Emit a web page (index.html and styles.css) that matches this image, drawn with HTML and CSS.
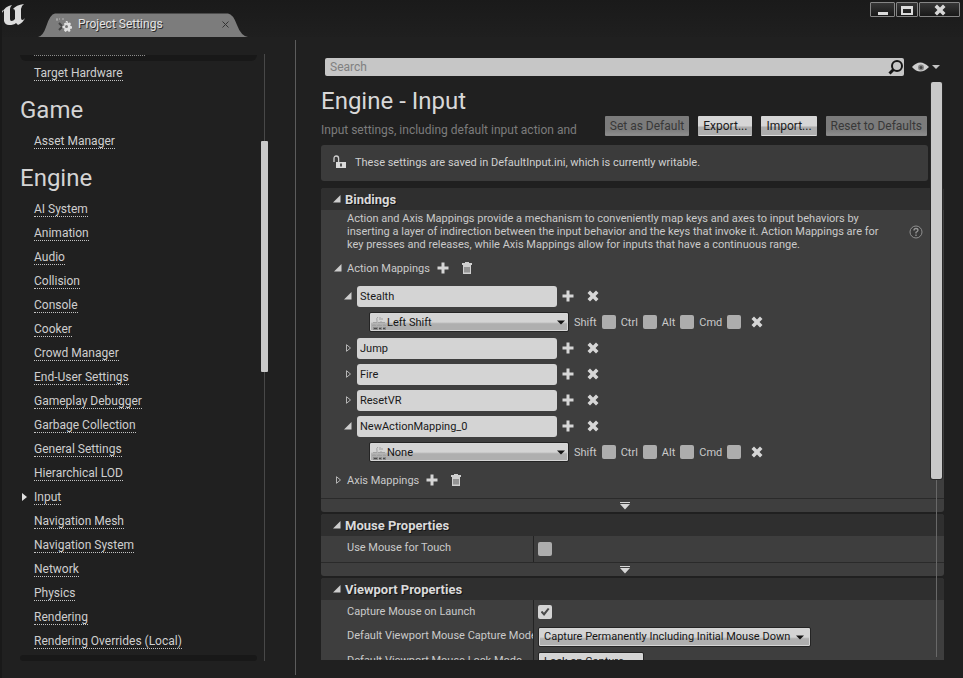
FILE: index.html
```html
<!DOCTYPE html>
<html lang="en">
<head>
<meta charset="utf-8">
<title>Project Settings</title>
<link rel="stylesheet" href="styles.css">
</head>
<body>
<svg class="defs" width="0" height="0" aria-hidden="true">
  <symbol id="plus" viewBox="0 0 12 12"><path d="M4.500 .5h3v4h4v3h-4v4h-3v-4h-4v-3h4z" fill="#d6d6d6"/></symbol>
  <symbol id="cross" viewBox="0 0 12 12"><path d="M.5 3l2.500-2.500 3 3 3-3 2.500 2.500-3 3 3 3-2.500 2.500-3-3-3 3-2.500-2.500 3-3z" fill="#d6d6d6"/></symbol>
  <symbol id="trash" viewBox="0 0 12 12"><path d="M4 0h4v1h3v2h-10v-2h3zM2 3h8v9h-8z" fill="#d0d0d0"/><path d="M4 5v5.500M6 5v5.500M8 5v5.500" stroke="#4a4a4a" stroke-width=".9"/></symbol>
  <symbol id="open" viewBox="0 0 8 8"><path d="M7.500 0v7.500h-7.500z" fill="#cdcdcd"/></symbol>
  <symbol id="shut" viewBox="0 0 8 8"><path d="M2.500 .7v6.600l4-3.300z" fill="none" stroke="#b4b4b4"/></symbol>
  <symbol id="down" viewBox="0 0 8 5"><path d="M0 0.500h8l-4 4z" fill="#141414"/></symbol>
  <symbol id="more" viewBox="0 0 12 8"><path d="M1 0h10v1h-10zM1 2h10l-5 5.500z" fill="#d6d6d6"/></symbol>
  <symbol id="keys" viewBox="0 0 15 15"><path d="M5 5q-1-3 1-4M8 4v-3M10 4v-2M1 6.500h4M6 6.500h7M0 9.500h4M5 9.500h5M11 9.500h3M5 5v2M9 5v2M2 8v2M7 8v2M12 8v2" fill="none" stroke="#a2a2a2"/><path d="M1 11h5v3h-5zM7 11h3v3h-3zM11 11h3v3h-3z" fill="#8b8b8b"/><path d="M2 12.500h3M7 12.500h2M11 12.500h2" stroke="#4b4b4b"/></symbol>
</svg>

<header class="titlebar">
  <svg class="logo" viewBox="0 0 24 22" role="img" aria-label="Unreal"><path d="M0 9Q3 2 10 1Q8 3 8 5v10q0 2 1.500 2q2 0 3.500-2v-8q0-2-2-2q3-4 11-5q-3 2-3 5v9q0 2 1.500 2q1 0 2.500-2q-2 5-7 7l-2-2q-2 2-7 2q-4 0-5-4v-9q0-1.500-1-1.500q-1.300 0-3 2.500z" fill="#dcdcdc"/></svg>
  <div class="tab">
    <svg class="tab-shape" viewBox="0 0 210 24" preserveAspectRatio="none" aria-hidden="true"><path d="M0 24Q5 23 8 14Q12 1 17 .5H190Q195 1 199 12Q203 23 210 24z" fill="#7c7c7c"/></svg>
    <svg class="tab-icon" viewBox="0 0 16 15" aria-hidden="true"><path d="M1 4v-3M0 2h4M6 2h3" stroke="#b5b5b5" stroke-dasharray="2 1"/><path d="M3 6l3 3M3 13l3-3" stroke="#454545" stroke-width="2"/><path d="M9.500 4h2l.5 2 2-.5 1 1.500-1 1.500 2 1v2l-2 .5 .5 2-1.500 1-1.500-1.500-2 1.500-1.500-1.500.5-2-2-.5v-2l2-.5-.5-2 1.500-1 1.500 1z" fill="#e0e0e0"/><circle cx="10.500" cy="9.500" r="1.500" fill="#777"/></svg>
    <span class="tab-name">Project Settings</span>
    <button class="tab-close" aria-label="Close tab"><svg viewBox="0 0 7 7"><path d="M.5.5l6 6M6.500.5l-6 6" stroke="#333"/></svg></button>
  </div>
  <div class="window-buttons">
    <button class="win" aria-label="Minimize"><svg width="12" height="12"><path d="M1 8h10v3H1z" fill="#dcdcdc"/></svg></button>
    <button class="win win-max" aria-label="Maximize"><svg width="12" height="12"><path d="M0 2h12v9H0zM2 5v4h8V5z" fill="#dcdcdc" fill-rule="evenodd"/></svg></button>
    <button class="win win-close" aria-label="Close"><svg width="12" height="12"><use href="#cross"/></svg></button>
  </div>
</header>

<div class="main">
  <nav class="sidebar" aria-label="Settings categories">
    <div class="list">
      <div class="edge edge-top"></div>
      <ul>
        <li><a href="#">Target Hardware</a></li>
      </ul>
      <h2>Game</h2>
      <ul>
        <li><a href="#">Asset Manager</a></li>
      </ul>
      <h2>Engine</h2>
      <ul>
        <li><a href="#">AI System</a></li>
        <li><a href="#">Animation</a></li>
        <li><a href="#">Audio</a></li>
        <li><a href="#">Collision</a></li>
        <li><a href="#">Console</a></li>
        <li><a href="#">Cooker</a></li>
        <li><a href="#">Crowd Manager</a></li>
        <li><a href="#">End-User Settings</a></li>
        <li><a href="#">Gameplay Debugger</a></li>
        <li><a href="#">Garbage Collection</a></li>
        <li><a href="#">General Settings</a></li>
        <li><a href="#">Hierarchical LOD</a></li>
        <li class="current"><a href="#">Input</a></li>
        <li><a href="#">Navigation Mesh</a></li>
        <li><a href="#">Navigation System</a></li>
        <li><a href="#">Network</a></li>
        <li><a href="#">Physics</a></li>
        <li><a href="#">Rendering</a></li>
        <li><a href="#">Rendering Overrides (Local)</a></li>
      </ul>
      <div class="edge edge-bottom"></div>
    </div>
    <div class="track"><div class="thumb"></div></div>
  </nav>

  <main class="content">
    <div class="search-row">
      <div class="search">
        <input type="search" placeholder="Search" aria-label="Search">
        <svg viewBox="0 0 16 16" aria-hidden="true"><circle cx="9" cy="7" r="5" fill="none" stroke="#161616" stroke-width="2"/><path d="M5.500 10.500l-4 4" stroke="#161616" stroke-width="3"/></svg>
      </div>
      <button class="view" aria-label="View options">
        <svg width="28" height="12" viewBox="0 0 28 12"><path d="M0 6Q8-3 17 6Q8 15 0 6z" fill="#cfcfcf"/><circle cx="9" cy="6.500" r="3" fill="#858585"/><circle cx="9" cy="6.500" r="1.500" fill="#404040"/><path d="M20 4h8l-4 4z" fill="#c4c4c4"/></svg>
      </button>
    </div>

    <div class="scroll">
      <h1>Engine - Input</h1>
      <div class="intro">
        <p>Input settings, including default input action and</p>
        <div class="actions">
          <button class="btn" disabled>Set as Default</button>
          <button class="btn">Export...</button>
          <button class="btn">Import...</button>
          <button class="btn" disabled>Reset to Defaults</button>
        </div>
      </div>
      <div class="notice">
        <svg width="13" height="14" viewBox="0 0 13 14" aria-hidden="true"><path d="M1 7v-3.500q0-2.500 2.300-2.500t2.300 2.500v3.500" fill="none" stroke="#cfcfcf" stroke-width="1.300"/><path d="M3 7h10v6h-10z" fill="#dadada"/><path d="M8 8.500v3" stroke="#222" stroke-width="1.500"/></svg>
        <span>These settings are saved in DefaultInput.ini, which is currently writable.</span>
      </div>

      <section>
        <h3><svg class="tri"><use href="#open"/></svg>Bindings</h3>
        <div class="body">
          <div class="about">
            <p>Action and Axis Mappings provide a mechanism to conveniently map keys and axes to input behaviors by<br>inserting a layer of indirection between the input behavior and the keys that invoke it. Action Mappings are for<br>key presses and releases, while Axis Mappings allow for inputs that have a continuous range.</p>
            <svg class="help" viewBox="0 0 14 14" role="img" aria-label="Help"><circle cx="7" cy="7" r="6" fill="#383838" stroke="#909090"/><path d="M5 5.500q0-2 2-2t2 1.800q0 1-2 2v1.200M7 9.500v1.500" fill="none" stroke="#989898" stroke-width="1.300"/></svg>
          </div>
          <div class="group">
            <svg class="tri"><use href="#open"/></svg><span>Action Mappings</span>
            <button class="icon" aria-label="Add action mapping"><svg><use href="#plus"/></svg></button>
            <button class="icon" aria-label="Remove all action mappings"><svg><use href="#trash"/></svg></button>
          </div>
          <div class="mapping">
            <svg class="tri"><use href="#open"/></svg><input type="text" value="Stealth" aria-label="Action name">
            <button class="icon" aria-label="Add key"><svg><use href="#plus"/></svg></button>
            <button class="icon" aria-label="Remove"><svg><use href="#cross"/></svg></button>
          </div>
          <div class="key">
            <div class="drop key-drop"><svg class="kb"><use href="#keys"/></svg><select aria-label="Key"><option>Left Shift</option></select><svg class="arrow"><use href="#down"/></svg></div>
            <label>Shift<input type="checkbox"></label><label>Ctrl<input type="checkbox"></label><label>Alt<input type="checkbox"></label><label>Cmd<input type="checkbox"></label>
            <button class="icon" aria-label="Remove key"><svg><use href="#cross"/></svg></button>
          </div>
          <div class="mapping">
            <svg class="tri"><use href="#shut"/></svg><input type="text" value="Jump" aria-label="Action name">
            <button class="icon" aria-label="Add key"><svg><use href="#plus"/></svg></button>
            <button class="icon" aria-label="Remove"><svg><use href="#cross"/></svg></button>
          </div>
          <div class="mapping">
            <svg class="tri"><use href="#shut"/></svg><input type="text" value="Fire" aria-label="Action name">
            <button class="icon" aria-label="Add key"><svg><use href="#plus"/></svg></button>
            <button class="icon" aria-label="Remove"><svg><use href="#cross"/></svg></button>
          </div>
          <div class="mapping">
            <svg class="tri"><use href="#shut"/></svg><input type="text" value="ResetVR" aria-label="Action name">
            <button class="icon" aria-label="Add key"><svg><use href="#plus"/></svg></button>
            <button class="icon" aria-label="Remove"><svg><use href="#cross"/></svg></button>
          </div>
          <div class="mapping">
            <svg class="tri"><use href="#open"/></svg><input type="text" value="NewActionMapping_0" aria-label="Action name">
            <button class="icon" aria-label="Add key"><svg><use href="#plus"/></svg></button>
            <button class="icon" aria-label="Remove"><svg><use href="#cross"/></svg></button>
          </div>
          <div class="key">
            <div class="drop key-drop"><svg class="kb"><use href="#keys"/></svg><select aria-label="Key"><option>None</option></select><svg class="arrow"><use href="#down"/></svg></div>
            <label>Shift<input type="checkbox"></label><label>Ctrl<input type="checkbox"></label><label>Alt<input type="checkbox"></label><label>Cmd<input type="checkbox"></label>
            <button class="icon" aria-label="Remove key"><svg><use href="#cross"/></svg></button>
          </div>
          <div class="group group-last">
            <svg class="tri"><use href="#shut"/></svg><span>Axis Mappings</span>
            <button class="icon" aria-label="Add axis mapping"><svg><use href="#plus"/></svg></button>
            <button class="icon" aria-label="Remove all axis mappings"><svg><use href="#trash"/></svg></button>
          </div>
        </div>
        <button class="expand" aria-label="Show advanced"><svg><use href="#more"/></svg></button>
      </section>

      <section>
        <h3><svg class="tri"><use href="#open"/></svg>Mouse Properties</h3>
        <div class="body">
          <div class="prop">
            <label for="touch">Use Mouse for Touch</label>
            <div class="value"><input type="checkbox" id="touch"></div>
          </div>
        </div>
        <button class="expand" aria-label="Show advanced"><svg><use href="#more"/></svg></button>
      </section>

      <section>
        <h3><svg class="tri"><use href="#open"/></svg>Viewport Properties</h3>
        <div class="body">
          <div class="prop">
            <label for="launch">Capture Mouse on Launch</label>
            <div class="value"><input type="checkbox" id="launch" checked></div>
          </div>
          <div class="prop">
            <label for="capture">Default Viewport Mouse Capture Mode</label>
            <div class="value"><div class="drop"><select id="capture"><option>Capture Permanently Including Initial Mouse Down</option></select><svg class="arrow"><use href="#down"/></svg></div></div>
          </div>
          <div class="prop">
            <label for="lock">Default Viewport Mouse Lock Mode</label>
            <div class="value"><div class="drop"><select id="lock"><option>Lock on Capture</option></select><svg class="arrow"><use href="#down"/></svg></div></div>
          </div>
        </div>
      </section>
      <div class="track content-track"><div class="thumb"></div></div>
    </div>
  </main>
</div>
</body>
</html>
```
FILE: styles.css
```css
* { box-sizing: border-box; }

body {
  margin: 0;
  height: 100vh;
  display: flex;
  flex-direction: column;
  overflow: hidden;
  background: #202020;
  border-left: 2px solid #191919;
  color: #cacaca;
  font: 11px/13px Roboto, sans-serif;
}

h1, h2, h3, p, ul { margin: 0; padding: 0; font-weight: 400; }
button, input, select { font: inherit; color: inherit; margin: 0; padding: 0; border: 0; }
button { background: none; }
svg { display: block; flex: none; }
.defs { position: absolute; }

/* Title bar */
.titlebar {
  height: 37px;
  flex: none;
  display: flex;
  align-items: flex-end;
  background: linear-gradient(#1a1a1a, #1f1f1f);
}
.logo { width: 24px; height: 22px; align-self: flex-start; margin-top: 4px; }
.tab {
  position: relative;
  width: 210px;
  height: 24px;
  margin-left: 12px;
  padding: 0 19px 2px 18px;
  display: flex;
  align-items: center;
  gap: 6px;
  color: #e4e4e4;
  font-size: 12px;
  text-shadow: 1px 1px 0 #2a2a2a;
}
.tab-shape { position: absolute; inset: 0; width: 100%; height: 100%; }
.tab-icon, .tab-name, .tab-close { position: relative; }
.tab-icon { width: 16px; height: 15px; }
.tab-close { margin-left: auto; }
.tab-close svg { width: 7px; height: 7px; }
.window-buttons { margin-left: auto; align-self: flex-start; display: flex; gap: 1px; padding: 2px 3px 0 0; }
.win {
  width: 25px;
  height: 15px;
  display: grid;
  place-items: center;
  border: 1px solid #858585;
  border-radius: 1px;
  background: linear-gradient(#363636, #191919);
}
.win-max { width: 22px; }
.win-close { width: 41px; }

/* Layout */
.main { flex: 1; min-height: 0; display: flex; }
.sidebar {
  flex: none;
  width: 294px;
  margin: 3px 0;
  padding: 14px 27px 14px 18px;
  display: flex;
  justify-content: space-between;
  border-right: 1px solid #5c5c5c;
}
.list { width: 237px; font-size: 12px; line-height: 14px; }
.list ul { list-style: none; }
.list li { height: 24px; padding: 5px 0 0 14px; }
.list a {
  display: inline-block;
  color: #cfcfcf;
  text-decoration: none;
  border-bottom: 1px dotted #c4c4c4;
}
.list h2 { height: 44px; padding-top: 11px; font-size: 24px; line-height: 28px; color: #d4d4d4; }
.current { position: relative; }
.current::before {
  content: "";
  position: absolute;
  left: 2px;
  top: 8px;
  border-left: 5px solid #e0e0e0;
  border-top: 4px solid transparent;
  border-bottom: 4px solid transparent;
}
.edge { height: 6px; background: #181818; }
.edge-top { border-radius: 0 0 8px 8px; margin-top: 1px; position: relative; }
.edge-top::before {
  content: "";
  position: absolute;
  left: 14px;
  top: 0;
  width: 111px;
  border-top: 1px dotted #8c8c8c;
}
.edge-bottom { border-radius: 4px; margin-top: 2px; }
.track {
  width: 7px;
  background: linear-gradient(#484848, #484848) center / 1px 100% no-repeat;
  display: flex;
  flex-direction: column;
}
.thumb { background: #c9c9c9; border-radius: 1px; }
.sidebar .thumb { height: 38%; margin-top: 87px; }

/* Content */
.content { flex: 1; min-width: 0; display: flex; flex-direction: column; padding: 21px 19px 18px 25px; }
.search-row { display: flex; align-items: center; gap: 8px; padding: 0 4px; }
.search { position: relative; flex: 1; }
.search input {
  display: block;
  width: 100%;
  height: 18px;
  padding: 0 24px 0 5px;
  border-radius: 2px;
  background: #c6c6c6;
  color: #222;
  font-size: 12px;
  appearance: none;
  outline: 0;
}
.search input::placeholder { color: #808080; opacity: 1; }
.search svg { position: absolute; right: 0; top: 1px; width: 16px; height: 16px; }

.scroll { position: relative; flex: 1; min-height: 0; margin-top: 6px; overflow: hidden; }
h1 { font-size: 24px; line-height: 28px; padding-top: 5px; color: #d8d8d8; }
.intro { display: flex; justify-content: space-between; align-items: flex-start; height: 22px; margin-right: 17px; padding-top: 1px; }
.intro p { color: #7c7c7c; font-size: 12px; line-height: 14px; padding-top: 7px; white-space: nowrap; }
.actions { display: flex; gap: 9px; }
.btn {
  height: 20px;
  padding: 0 5px;
  background: linear-gradient(#d6d6d6 50%, #adadad 60%);
  border-bottom: 1px solid #dcdcdc;
  color: #1a1a1a;
  font-size: 12px;
  line-height: 18px;
  border-radius: 1px;
  white-space: nowrap;
}
.btn:disabled { background: linear-gradient(#7b7b7b 70%, #8c8c8c); border-color: #888; color: #383838; }
.notice {
  height: 36px;
  margin: 8px 16px 7px 0;
  padding: 0 0 2px 12px;
  display: flex;
  align-items: center;
  gap: 9px;
  border-radius: 3px;
  background: #3b3b3b;
  color: #d0d0d0;
}

section { margin-bottom: 2px; border-radius: 3px; overflow: hidden; background: #3e3e3e; }
h3 {
  display: flex;
  align-items: center;
  gap: 4px;
  height: 22px;
  padding-left: 12px;
  background: #2f2f2f;
  color: #dadada;
  font-size: 13px;
  font-weight: 700;
  text-shadow: 1px 1px 0 #151515;
}
.tri { width: 8px; height: 8px; }
.about { display: flex; align-items: center; justify-content: space-between; padding: 2px 21px 2px 26px; }
.about p { white-space: nowrap; }
.help { width: 14px; height: 14px; }
.group { height: 30px; padding-left: 13px; display: flex; align-items: center; gap: 5px; }
.group span { margin-right: 2px; }
.group .icon + .icon { margin-left: 7px; }
.group-last { margin-bottom: 3px; }
.icon { flex: none; width: 12px; height: 12px; }
.icon svg { width: 12px; height: 12px; }
.mapping { height: 26px; padding-left: 23px; display: flex; align-items: center; gap: 5px; }
.mapping .icon + .icon { margin-left: 8px; }
.mapping input {
  width: 200px;
  height: 21px;
  padding: 0 3px;
  border-radius: 3px;
  background: #d4d4d4;
  color: #191919;
  outline: 0;
}
.key { height: 26px; padding-left: 48px; display: flex; align-items: center; gap: 5px; }
.key label { display: flex; align-items: center; gap: 5px; }
.key > .icon { margin-left: 5px; }
.drop { position: relative; display: flex; }
.drop select {
  appearance: none;
  width: 100%;
  height: 20px;
  padding: 0 19px 0 5px;
  border: 1px solid #242424;
  border-radius: 2px;
  outline: 0;
  background: linear-gradient(#d4d4d4 50%, #afafaf 60%);
  box-shadow: inset 0 0 0 1px #d6d6d6;
  color: #151515;
}
.key-drop { width: 200px; }
.key-drop select { padding-left: 17px; }
.kb { position: absolute; left: 3px; top: 4px; width: 15px; height: 15px; }
.arrow { position: absolute; right: 4px; top: 8px; width: 8px; height: 5px; }
.value .arrow { right: 7px; }
input[type="checkbox"] { appearance: none; width: 14px; height: 14px; border-radius: 2px; background: #adadad; }
input[type="checkbox"]:checked {
  background: #d4d4d4;
  display: grid;
  place-items: center;
}
input[type="checkbox"]:checked::before {
  content: "";
  width: 9px;
  height: 8px;
  background: #4a4a4a;
  clip-path: polygon(0 50%, 22% 38%, 38% 60%, 82% 0, 100% 12%, 40% 100%);
}
.expand {
  width: 100%;
  height: 14px;
  border-top: 1px solid #2a2a2a;
  display: flex;
  align-items: center;
  justify-content: center;
  padding-right: 15px;
}
.expand svg { width: 12px; height: 8px; }
.prop { display: grid; grid-template-columns: 212px 1fr; height: 25px; }
.prop:first-child { height: 24px; }
.prop:only-child { height: 26px; }
.prop > label { padding-left: 26px; line-height: 24px; overflow: hidden; white-space: nowrap; }
.value { display: flex; align-items: center; padding-left: 4px; border-left: 1px solid #232323; }
.content-track { position: absolute; top: 0; bottom: 3px; right: 2px; width: 11px; background-image: linear-gradient(#686868, #686868); }
.content-track .thumb { height: 69%; border-radius: 2px; box-shadow: 0 0 0 1px #292929; }
```
